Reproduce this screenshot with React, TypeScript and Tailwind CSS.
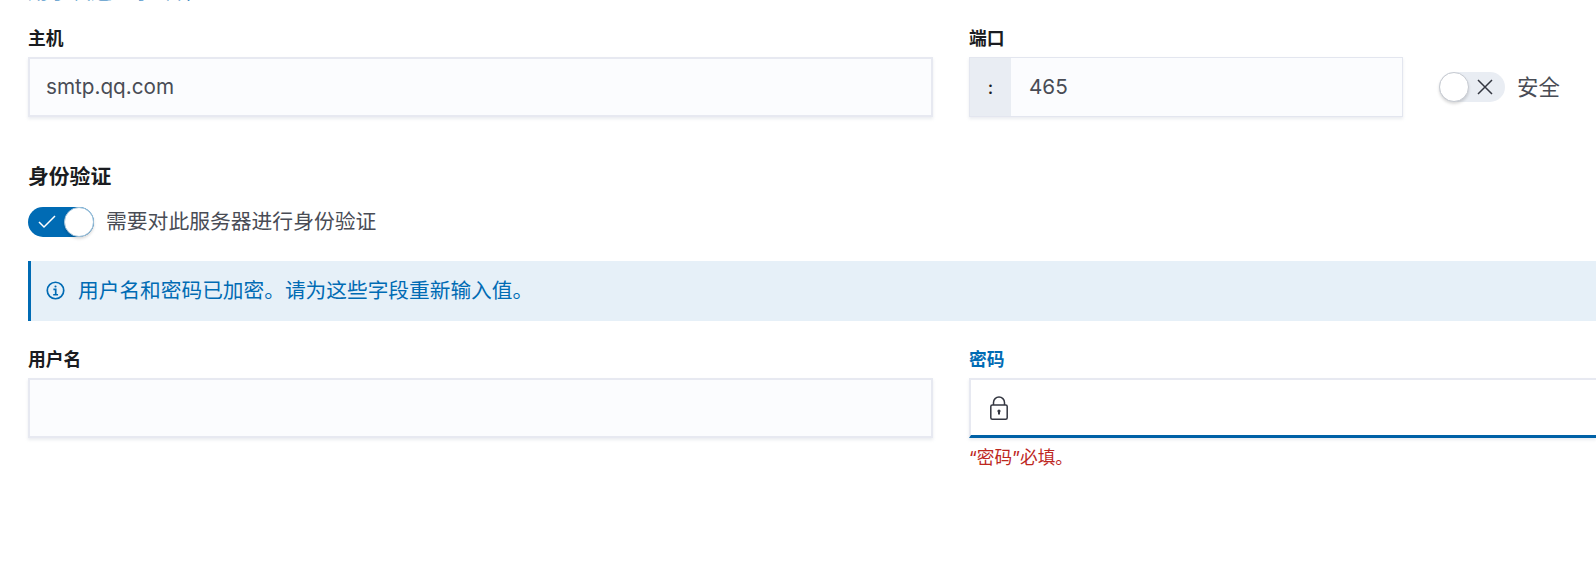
const fontStack = "font-['Inter','Noto_Sans_CJK_SC',sans-serif]";

const Switch = ({ on }: { on: boolean }) => (
  <div
    className={`relative h-[30px] w-[66px] shrink-0 rounded-full ${
      on ? "bg-[#006bb4]" : "bg-[#e9edf3]"
    }`}
  >
    {on ? (
      <svg className="absolute left-[10px] top-[7px] h-4 w-[18px]" viewBox="0 0 18 16" fill="none" stroke="#fff" strokeWidth="1.5">
        <path d="M1 8l5 5L17 2" />
      </svg>
    ) : (
      <svg className="absolute left-[38px] top-[7px] h-[16px] w-[16px]" viewBox="0 0 16 16" fill="none" stroke="#343741" strokeWidth="1.5">
        <path d="M1 1l14 14M15 1L1 15" />
      </svg>
    )}
    <div
      className={`absolute top-0 h-[30px] w-[30px] rounded-full border bg-white ${
        on
          ? "left-[36px] border-[#a3c4dc] shadow-[0_2px_3px_rgba(0,0,0,0.15)]"
          : "left-0 border-[#c6cad1] shadow-[0_2px_3px_rgba(0,0,0,0.15)]"
      }`}
    />
  </div>
);

const Label = ({ children, blue }: { children: React.ReactNode; blue?: boolean }) => (
  <div className={`mb-[9px] h-[22px] text-[17.8px] font-semibold leading-[25px] ${blue ? "text-[#006bb4]" : "text-[#1a1c21]"}`}>
    {children}
  </div>
);

const inputBox =
  "h-[60px] border-2 border-[#e7e9f1] bg-[#fbfcfe] shadow-[0_2px_3px_rgba(152,162,179,0.2)]";

export default function App() {
  return (
    <div className={`h-[588px] w-[1596px] overflow-hidden bg-white pl-[28px] ${fontStack}`}>
      <div className="-mt-[22px] h-[48px] text-[21px] leading-[26px] text-[#006bb4]">用于发送电子邮件</div>

      <div className="grid grid-cols-[905px_1fr] gap-x-[36px]">
        <div>
          <Label>主机</Label>
          <div className={`${inputBox} flex items-center pl-[16px] text-[20.7px] text-[#494c55]`}>smtp.qq.com</div>
        </div>
        <div className="flex items-end">
          <div className="w-[434px]">
            <Label>端口</Label>
            <div className={`${inputBox} flex items-center !border !border-[#e3e6ef]`}>
              <div className="flex h-full w-[41px] items-center justify-center bg-[#e9edf3] text-[18px] font-medium text-[#1a1c21]">:</div>
              <div className="pl-[18px] text-[20.7px] text-[#494c55]">465</div>
            </div>
          </div>
          <div className="mb-[15px] ml-[36px] flex items-center gap-[12px]">
            <Switch on={false} />
            <span className="text-[21.4px] leading-[30px] text-[#494c55]">安全</span>
          </div>
        </div>
      </div>

      <div className="mt-[47px] h-[26px] text-[20.8px] font-semibold leading-[26px] text-[#1a1c21]">身份验证</div>
      <div className="mt-[17px] flex items-center gap-[12px]">
        <Switch on />
        <span className="text-[20.8px] leading-[30px] text-[#494c55]">需要对此服务器进行身份验证</span>
      </div>

      <div className="mt-[24px] flex h-[60px] items-center border-l-[3px] border-[#006bb4] bg-[#e6f0f8] pl-[15px] text-[20.7px] text-[#006bb4]">
        <svg className="mr-[13px] h-[19px] w-[19px] -translate-y-[1px]" viewBox="0 0 18 18" fill="none" stroke="#006bb4" strokeWidth="1.6">
          <circle cx="9" cy="9" r="7.8" />
          <path d="M7 8h2.2v5M6.8 13h4.6" />
          <circle cx="9" cy="5.2" r="1" fill="#006bb4" stroke="none" />
        </svg>
        用户名和密码已加密。请为这些字段重新输入值。
      </div>

      <div className="mt-[26px] grid grid-cols-[905px_1fr] gap-x-[36px]">
        <div>
          <Label>用户名</Label>
          <div className={inputBox} />
        </div>
        <div>
          <Label blue>密码</Label>
          <div className="flex h-[60px] items-center border-b-[3px] border-l-2 border-t-2 border-[#e7e9f1] !border-b-[#0061a6] bg-white pl-[19px] shadow-[0_2px_3px_rgba(152,162,179,0.2)]">
            <svg className="h-[24px] w-[18px]" viewBox="0 0 18 24" fill="none" stroke="#343741" strokeWidth="1.5">
              <rect x="0.8" y="9" width="16.4" height="14.2" rx="1.5" />
              <path d="M3.5 9V6.5a5.5 5.5 0 0 1 11 0V9" />
              <circle cx="9" cy="15" r="1.6" fill="#343741" stroke="none" />
              <path d="M9 15v3.5" strokeWidth="2" />
            </svg>
          </div>
          <div className="mt-[11px] text-[17.7px] leading-[18px] text-[#bd271e]">“密码”必填。</div>
        </div>
      </div>
    </div>
  );
}
